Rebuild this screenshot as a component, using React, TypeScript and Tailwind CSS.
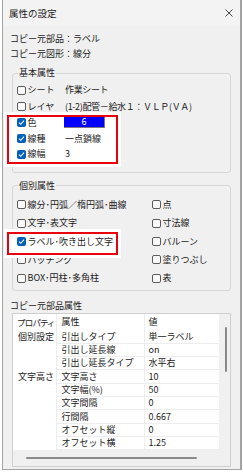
const jp = "font-['Noto_Sans_CJK_JP','Noto_Sans',sans-serif] [font-feature-settings:'pkna']";

function Check({ on }: { on?: boolean }) {
  if (on) {
    return (
      <span className="flex h-[9px] w-[9px] shrink-0 items-center justify-center rounded-[2px] bg-[#005fb8]">
        <svg width="7" height="7" viewBox="0 0 7 7">
          <path d="M1 3.6 L2.8 5.3 L6 1.6" fill="none" stroke="#fff" strokeWidth="1.1" />
        </svg>
      </span>
    );
  }
  return <span className="h-[9px] w-[9px] shrink-0 rounded-[2px] border border-[#5a5a5a] bg-[#fbfbfb]" />;
}

function Opt({ label, on, z }: { label: string; on?: boolean; z?: boolean }) {
  return (
    <div className={`flex items-center gap-[1.5px] whitespace-nowrap ${z ? "relative z-20" : ""}`}>
      <Check on={on} />
      <span>{label}</span>
    </div>
  );
}

const basic = [
  { label: "シート", value: "作業シート", h: "h-[17px]" },
  { label: "レイヤ", value: "(1-2)配管－給水１：ＶＬＰ(ＶＡ)", h: "h-[16px]" },
];

const indiv: [string, boolean, string][] = [
  ["線分･円弧／楕円弧･曲線", false, "点"],
  ["文字･表文字", false, "寸法線"],
  ["ラベル･吹き出し文字", true, "バルーン"],
  ["ハッチング", false, "塗りつぶし"],
  ["BOX･円柱･多角柱", false, "表"],
];

const rows = [
  ["個別設定", "引出しタイプ", "単一ラベル"],
  ["", "引出し延長線", "on"],
  ["", "引出し延長タイプ", "水平右"],
  ["文字高さ", "文字高さ", "10"],
  ["", "文字幅(%)", "50"],
  ["", "文字間隔", "0"],
  ["", "行間隔", "0.667"],
  ["", "オフセット縦", "0"],
  ["", "オフセット横", "1.25"],
];

export default function App() {
  return (
    <div className={`h-[475px] w-[243px] bg-white text-[9px] leading-[12px] text-[#1b1b1b] ${jp}`}>
      <div className="relative ml-[2px] flex h-[470px] w-[240px] flex-col border-b border-l border-r-2 border-[#a3a3a3] bg-[#f0f0f0]">
        {/* title bar */}
        <div className="flex h-[26px] shrink-0 items-center justify-between bg-[#f3f3f3] pl-[6px] pr-[7px]">
          <span className="text-[9.5px]">属性の設定</span>
          <svg width="8" height="8" viewBox="0 0 8 8">
            <path d="M0.5 0.5 L7.5 7.5 M7.5 0.5 L0.5 7.5" stroke="#333" strokeWidth="0.9" />
          </svg>
        </div>

        <div className="flex flex-1 flex-col px-[9px]">
          <div className="pt-[5px]">
            <div className="-ml-[2px] flex h-[15px] items-center">コピー元部品：ラベル</div>
            <div className="-ml-[2px] flex h-[15px] items-center">コピー元図形：線分</div>
          </div>

          {/* 基本属性 */}
          <fieldset className="mt-[6.3px] rounded-[3px] border border-[#d6d6d6] pb-[10.5px] pl-[4px] pt-[2.7px]">
            <legend className="ml-[1px] px-[1px]">基本属性</legend>
            {basic.map((r) => (
              <div key={r.label} className={`flex items-center ${r.h}`}>
                <div className="w-[48px] shrink-0">
                  <Opt label={r.label} />
                </div>
                <span className="whitespace-nowrap tracking-[-0.35px]">{r.value}</span>
              </div>
            ))}
            <div className="relative z-20 flex h-[16px] items-center">
              <div className="w-[47px] shrink-0">
                <Opt label="色" on />
              </div>
              <span className="flex h-[11px] w-[41px] items-center justify-center border-b border-r border-[#7a7a7a] bg-[#0000ff] text-white">
                6
              </span>
            </div>
            <div className="relative z-20 flex h-[16px] items-center">
              <div className="w-[48px] shrink-0">
                <Opt label="線種" on />
              </div>
              <span>一点鎖線</span>
            </div>
            <div className="relative z-20 flex h-[15px] items-center">
              <div className="w-[48px] shrink-0">
                <Opt label="線幅" on />
              </div>
              <span>3</span>
            </div>
          </fieldset>

          {/* 個別属性 */}
          <fieldset className="mt-[6.5px] rounded-[3px] border border-[#d6d6d6] pb-[2.4px] pl-[4px] pt-[3.8px]">
            <legend className="ml-[1px] px-[1px]">個別属性</legend>
            {indiv.map(([l, on, r]) => (
              <div key={l} className="flex h-[18.3px] items-center">
                <div className="w-[135px] shrink-0">
                  <Opt label={l} on={on} z={on} />
                </div>
                <Opt label={r} />
              </div>
            ))}
          </fieldset>

          <div className="-ml-[2px] mt-[8.3px] flex h-[14px] items-center">コピー元部品属性</div>

          {/* property list */}
          <div className="flex h-[154px] border border-[#cfcfcf] bg-[#f0f0f0]">
            <div className="flex w-[206px] flex-col">
              <div className="flex h-[136.5px] flex-col bg-white">
                <div className="flex h-[16.5px] items-center whitespace-nowrap">
                  <span className="w-[42.5px] shrink-0 pl-[4.5px] text-[8.5px] tracking-[-0.4px] [font-feature-settings:'palt']">
                    プロパティ
                  </span>
                  <span className="flex h-full w-[88px] shrink-0 items-center border-l border-[#ededed] pl-[5px]">属性</span>
                  <span className="flex h-full flex-1 items-center border-l border-[#ededed] pl-[4px]">値</span>
                </div>
                {rows.map((r, i) => (
                  <div key={i} className="flex h-[13.4px] items-center whitespace-nowrap">
                    <span className="w-[42.5px] shrink-0 pl-[5px]">{r[0]}</span>
                    <span className="flex h-full w-[88px] shrink-0 items-center border-b border-l border-[#ededed] pl-[5px]">
                      {r[1]}
                    </span>
                    <span className="flex h-full flex-1 items-center border-b border-l border-[#ededed] pl-[4px]">
                      {r[2]}
                    </span>
                  </div>
                ))}
              </div>
              <div className="flex flex-1 items-center pl-[13px]">
                <div className="h-[2px] w-[171px] rounded-full bg-[#8a8a8a]" />
              </div>
            </div>
            <div className="flex-1 pl-[5.5px] pt-[13px]">
              <div className="h-[45px] w-[2px] rounded-full bg-[#8a8a8a]" />
            </div>
          </div>
        </div>

        {/* red highlight annotations */}
        <div className="absolute left-[3.7px] top-[115px] z-10 h-[49.3px] w-[111.6px] border-2 border-[#e8000b] bg-white outline-[3px] outline-white" />
        <div className="absolute left-[4px] top-[231.7px] z-10 h-[23.3px] w-[111px] border-2 border-[#e8000b] bg-white outline-[3px] outline-white" />
      </div>
    </div>
  );
}
